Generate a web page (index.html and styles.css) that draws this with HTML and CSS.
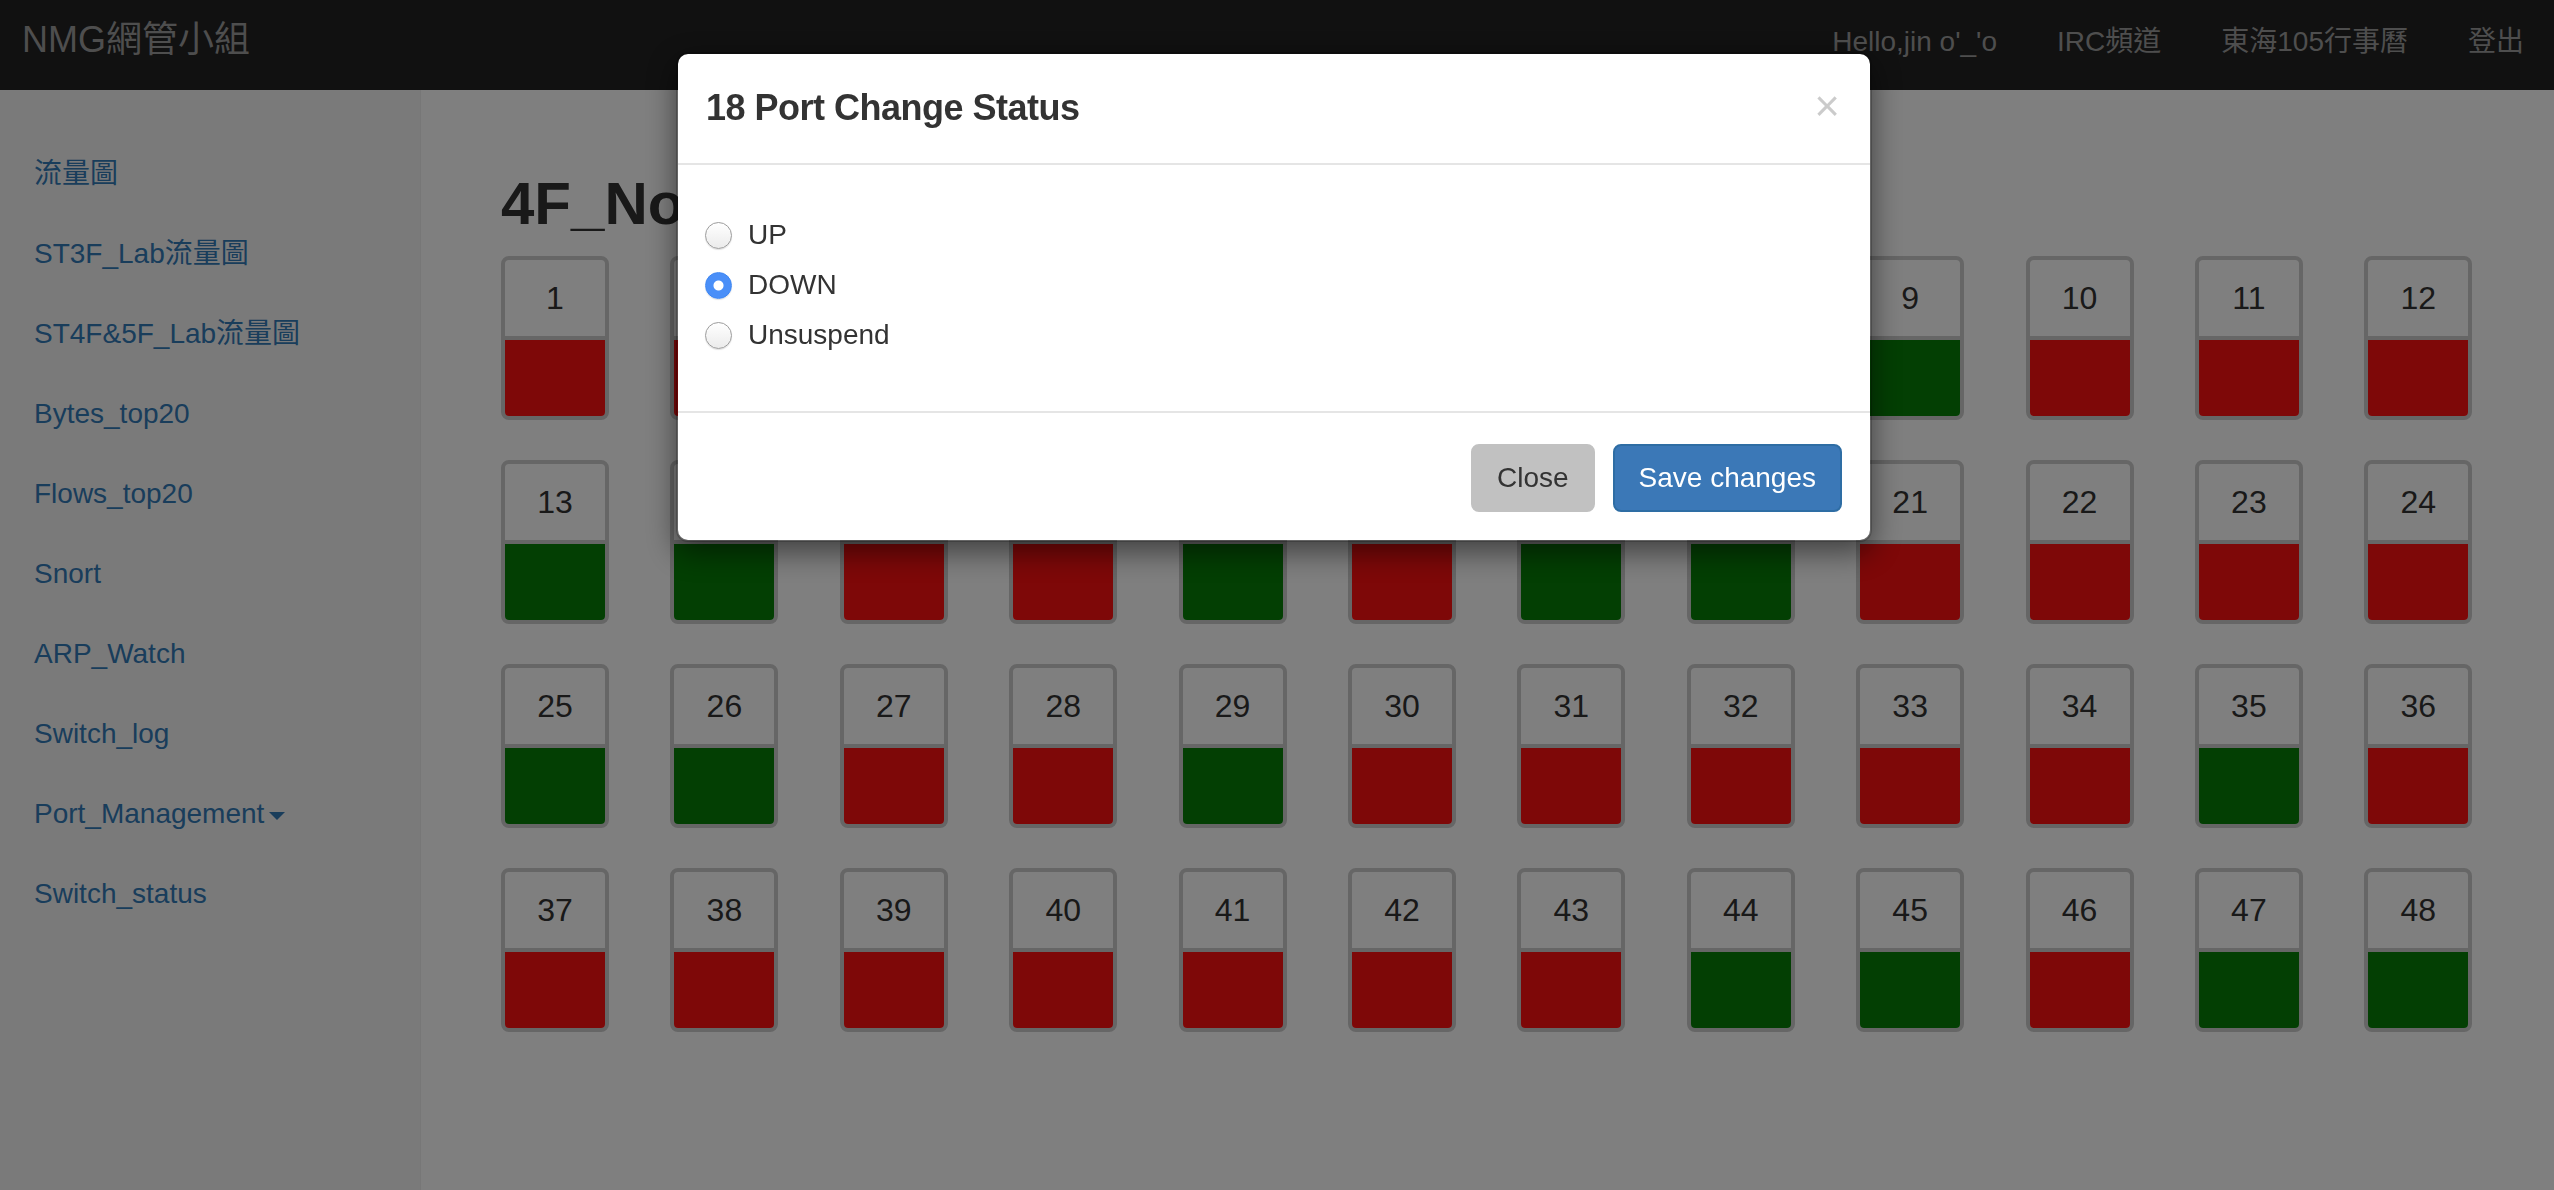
FILE: index.html
```html
<!DOCTYPE html>
<html lang="zh-Hant">
<head>
<meta charset="utf-8">
<title>NMG網管小組</title>
<link rel="stylesheet" href="styles.css">
</head>
<body>
<nav class="navbar">
  <a class="brand" href="#">NMG網管小組</a>
  <ul class="nav-links">
    <li><a href="#">Hello,jin o'_'o</a></li>
    <li><a href="#">IRC頻道</a></li>
    <li><a href="#">東海105行事曆</a></li>
    <li><a href="#">登出</a></li>
  </ul>
</nav>
<div class="layout">
  <aside class="sidebar">
    <ul class="side-nav">
      <li><a href="#">流量圖</a></li>
      <li><a href="#">ST3F_Lab流量圖</a></li>
      <li><a href="#">ST4F&amp;5F_Lab流量圖</a></li>
      <li><a href="#">Bytes_top20</a></li>
      <li><a href="#">Flows_top20</a></li>
      <li><a href="#">Snort</a></li>
      <li><a href="#">ARP_Watch</a></li>
      <li><a href="#">Switch_log</a></li>
      <li><a href="#">Port_Management<span class="caret"></span></a></li>
      <li><a href="#">Switch_status</a></li>
    </ul>
  </aside>
  <main class="main">
    <h1 class="page-title">4F_North_Switch</h1>
    <div class="ports">
      <div class="port"><div class="port-num">1</div><div class="port-st down"></div></div>
      <div class="port"><div class="port-num">2</div><div class="port-st down"></div></div>
      <div class="port"><div class="port-num">3</div><div class="port-st down"></div></div>
      <div class="port"><div class="port-num">4</div><div class="port-st up"></div></div>
      <div class="port"><div class="port-num">5</div><div class="port-st down"></div></div>
      <div class="port"><div class="port-num">6</div><div class="port-st up"></div></div>
      <div class="port"><div class="port-num">7</div><div class="port-st down"></div></div>
      <div class="port"><div class="port-num">8</div><div class="port-st up"></div></div>
      <div class="port"><div class="port-num">9</div><div class="port-st up"></div></div>
      <div class="port"><div class="port-num">10</div><div class="port-st down"></div></div>
      <div class="port"><div class="port-num">11</div><div class="port-st down"></div></div>
      <div class="port"><div class="port-num">12</div><div class="port-st down"></div></div>

      <div class="port"><div class="port-num">13</div><div class="port-st up"></div></div>
      <div class="port"><div class="port-num">14</div><div class="port-st up"></div></div>
      <div class="port"><div class="port-num">15</div><div class="port-st down"></div></div>
      <div class="port"><div class="port-num">16</div><div class="port-st down"></div></div>
      <div class="port"><div class="port-num">17</div><div class="port-st up"></div></div>
      <div class="port"><div class="port-num">18</div><div class="port-st down"></div></div>
      <div class="port"><div class="port-num">19</div><div class="port-st up"></div></div>
      <div class="port"><div class="port-num">20</div><div class="port-st up"></div></div>
      <div class="port"><div class="port-num">21</div><div class="port-st down"></div></div>
      <div class="port"><div class="port-num">22</div><div class="port-st down"></div></div>
      <div class="port"><div class="port-num">23</div><div class="port-st down"></div></div>
      <div class="port"><div class="port-num">24</div><div class="port-st down"></div></div>

      <div class="port"><div class="port-num">25</div><div class="port-st up"></div></div>
      <div class="port"><div class="port-num">26</div><div class="port-st up"></div></div>
      <div class="port"><div class="port-num">27</div><div class="port-st down"></div></div>
      <div class="port"><div class="port-num">28</div><div class="port-st down"></div></div>
      <div class="port"><div class="port-num">29</div><div class="port-st up"></div></div>
      <div class="port"><div class="port-num">30</div><div class="port-st down"></div></div>
      <div class="port"><div class="port-num">31</div><div class="port-st down"></div></div>
      <div class="port"><div class="port-num">32</div><div class="port-st down"></div></div>
      <div class="port"><div class="port-num">33</div><div class="port-st down"></div></div>
      <div class="port"><div class="port-num">34</div><div class="port-st down"></div></div>
      <div class="port"><div class="port-num">35</div><div class="port-st up"></div></div>
      <div class="port"><div class="port-num">36</div><div class="port-st down"></div></div>

      <div class="port"><div class="port-num">37</div><div class="port-st down"></div></div>
      <div class="port"><div class="port-num">38</div><div class="port-st down"></div></div>
      <div class="port"><div class="port-num">39</div><div class="port-st down"></div></div>
      <div class="port"><div class="port-num">40</div><div class="port-st down"></div></div>
      <div class="port"><div class="port-num">41</div><div class="port-st down"></div></div>
      <div class="port"><div class="port-num">42</div><div class="port-st down"></div></div>
      <div class="port"><div class="port-num">43</div><div class="port-st down"></div></div>
      <div class="port"><div class="port-num">44</div><div class="port-st up"></div></div>
      <div class="port"><div class="port-num">45</div><div class="port-st up"></div></div>
      <div class="port"><div class="port-num">46</div><div class="port-st down"></div></div>
      <div class="port"><div class="port-num">47</div><div class="port-st up"></div></div>
      <div class="port"><div class="port-num">48</div><div class="port-st up"></div></div>
    </div>
  </main>
</div>

<div class="backdrop"></div>

<div class="modal">
  <div class="modal-header">
    <h4 class="modal-title">18 Port Change Status</h4>
    <button class="close" type="button">×</button>
  </div>
  <div class="modal-body">
    <div class="radio"><label><input type="radio" name="st" value="up">UP</label></div>
    <div class="radio"><label><input type="radio" name="st" value="down" checked>DOWN</label></div>
    <div class="radio"><label><input type="radio" name="st" value="unsuspend">Unsuspend</label></div>
  </div>
  <div class="modal-footer">
    <button class="btn btn-default" type="button">Close</button>
    <button class="btn btn-primary" type="button">Save changes</button>
  </div>
</div>
</body>
</html>
```

FILE: styles.css
```css
* { box-sizing: border-box; }

html, body {
  margin: 0;
  height: 100%;
}

body {
  font-family: "Liberation Sans", Arial, "Noto Sans CJK TC", sans-serif;
  font-size: 28px;
  line-height: 40px;
  color: #333;
  background: #fff;
  overflow: hidden;
}

ul { list-style: none; margin: 0; padding: 0; }
a { text-decoration: none; }

/* navbar */
.navbar {
  height: 90px;
  background: #222;
  display: flex;
  justify-content: space-between;
}
.brand {
  font-size: 36px;
  line-height: 40px;
  padding: 20px 0 0 22px;
  color: #9d9d9d;
}
.nav-links { display: flex; }
.nav-links a {
  display: block;
  padding: 22px 30px 0;
  line-height: 40px;
  color: #9d9d9d;
}

/* layout */
.layout {
  display: flex;
  height: calc(100% - 90px);
}
.sidebar {
  width: 421px;
  flex: none;
  background: #f5f5f5;
  border-right: 1px solid #eee;
  padding-top: 44px;
}
.side-nav a {
  display: block;
  padding: 20px 34px;
  line-height: 40px;
  color: #337ab7;
}
.caret {
  display: inline-block;
  width: 0;
  height: 0;
  margin-left: 5px;
  vertical-align: middle;
  border-top: 8px solid;
  border-left: 8px solid transparent;
  border-right: 8px solid transparent;
}

.main {
  flex: 1;
  padding-left: 80px;
  overflow: hidden;
}
.page-title {
  margin: 81px 0 19px;
  font-size: 60px;
  line-height: 66px;
  font-weight: bold;
  color: #333;
  white-space: nowrap;
}

/* port grid */
.ports {
  display: grid;
  grid-template-columns: repeat(12, 108px);
  column-gap: 61.4px;
  row-gap: 40px;
}
.port {
  border: 4px solid #cccccc;
  border-radius: 8px;
  overflow: hidden;
  background: #fff;
}
.port-num {
  height: 80px;
  display: flex;
  align-items: center;
  justify-content: center;
  font-size: 32px;
  color: #333;
  border-bottom: 4px solid #cccccc;
}
.port-st { height: 76px; }
.up { background: #067e06; }
.down { background: #fc1010; }

/* modal */
.backdrop {
  position: fixed;
  inset: 0;
  background: rgba(0, 0, 0, 0.5);
}
.modal {
  position: fixed;
  top: 52px;
  left: 676px;
  width: 1196px;
  background: #fff;
  background-clip: padding-box;
  border: 2px solid rgba(0, 0, 0, 0.2);
  border-radius: 12px;
  box-shadow: 0 10px 30px rgba(0, 0, 0, 0.5);
}
.modal-header {
  display: flex;
  justify-content: space-between;
  align-items: flex-start;
  padding: 28px 30px 30px 28px;
  border-bottom: 2px solid #e5e5e5;
}
.modal-title {
  margin: 0;
  font-size: 36px;
  line-height: 51.4px;
  font-weight: bold;
  letter-spacing: -0.5px;
  color: #333;
}
.close {
  padding: 0;
  margin-top: 3px;
  background: none;
  border: 0;
  font-family: inherit;
  font-size: 44px;
  line-height: 42px;
  font-weight: normal;
  color: #000;
  opacity: 0.2;
  text-shadow: 0 2px 0 #fff;
}
.modal-body {
  padding: 30px 30px 36px;
}
.radio { margin: 20px 0; }
.radio + .radio { margin-top: -10px; }
.radio label {
  display: flex;
  align-items: center;
  height: 40px;
  color: #333;
}
.radio input {
  appearance: none;
  -webkit-appearance: none;
  flex: none;
  width: 27px;
  height: 27px;
  margin: 0 16px 0 -3px;
  border-radius: 50%;
  border: 1px solid #9c9c9c;
  background: linear-gradient(#ffffff, #ebebeb);
  box-shadow: 0 1px 1px rgba(0, 0, 0, 0.12);
}
.radio input:checked {
  border-color: #3d86f2;
  background: radial-gradient(circle, #fff 0 4.5px, #4a8ff8 5.5px);
}
.modal-footer {
  display: flex;
  justify-content: flex-end;
  gap: 18px;
  padding: 31px 28px 28px 30px;
  border-top: 2px solid #e5e5e5;
}
.btn {
  font-family: inherit;
  font-size: 28px;
  line-height: 40px;
  padding: 12px 24px;
  border: 2px solid;
  border-radius: 8px;
}
.btn-default {
  background: #c1c1c1;
  border-color: #c1c1c1;
  color: #333;
}
.btn-primary {
  background: #3b78b7;
  border-color: #2e6da4;
  color: #fff;
}
```
